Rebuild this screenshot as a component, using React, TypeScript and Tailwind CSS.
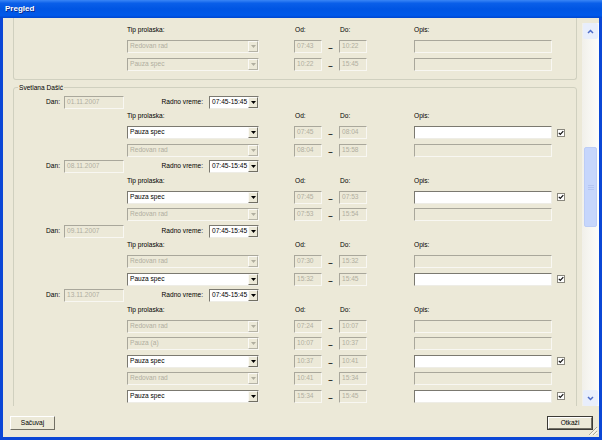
import React from "react";

type RowData = { tip: string; od: string; do: string; on: boolean };
type Block = { dan: string; rows: RowData[] };

const group1: RowData[] = [
  { tip: "Redovan rad", od: "07:43", do: "10:22", on: false },
  { tip: "Pauza spec", od: "10:22", do: "15:45", on: false },
];

const blocks: Block[] = [
  {
    dan: "01.11.2007",
    rows: [
      { tip: "Pauza spec", od: "07:45", do: "08:04", on: true },
      { tip: "Redovan rad", od: "08:04", do: "15:58", on: false },
    ],
  },
  {
    dan: "08.11.2007",
    rows: [
      { tip: "Pauza spec", od: "07:45", do: "07:53", on: true },
      { tip: "Redovan rad", od: "07:53", do: "15:54", on: false },
    ],
  },
  {
    dan: "09.11.2007",
    rows: [
      { tip: "Redovan rad", od: "07:30", do: "15:32", on: false },
      { tip: "Pauza spec", od: "15:32", do: "15:45", on: true },
    ],
  },
  {
    dan: "13.11.2007",
    rows: [
      { tip: "Redovan rad", od: "07:24", do: "10:07", on: false },
      { tip: "Pauza (a)", od: "10:07", do: "10:37", on: false },
      { tip: "Pauza spec", od: "10:37", do: "10:41", on: true },
      { tip: "Redovan rad", od: "10:41", do: "15:34", on: false },
      { tip: "Pauza spec", od: "15:34", do: "15:45", on: true },
    ],
  },
];

function Field({ w, text, on }: { w: string; text: string; on?: boolean }) {
  return (
    <div
      className={`${w} shrink-0 h-full flex items-center pl-[2px] border overflow-hidden whitespace-nowrap ${
        on
          ? "bg-white text-black border-t-[#7b7970] border-l-[#7b7970] border-b-[#eeede6] border-r-[#eeede6]"
          : "bg-[#ece9d8] text-[#b0ae9f] border-t-[#a9a79b] border-l-[#a9a79b] border-b-[#f8f7f2] border-r-[#f8f7f2]"
      }`}
    >
      {text}
    </div>
  );
}

function Select({ w, text, on }: { w: string; text: string; on?: boolean }) {
  return (
    <div
      className={`${w} shrink-0 h-full flex border ${
        on
          ? "bg-white text-black border-t-[#7b7970] border-l-[#7b7970] border-b-[#eeede6] border-r-[#eeede6]"
          : "bg-[#ece9d8] text-[#b0ae9f] border-t-[#a9a79b] border-l-[#a9a79b] border-b-[#f8f7f2] border-r-[#f8f7f2]"
      }`}
    >
      <div className="flex-1 flex items-center pl-[2px] overflow-hidden whitespace-nowrap">{text}</div>
      <div
        className={`w-[10px] shrink-0 h-full flex items-center justify-center bg-[#ece9d8] border border-t-[#fbfaf6] border-l-[#fbfaf6] ${
          on ? "border-b-[#716f64] border-r-[#716f64]" : "border-b-[#b5b3a6] border-r-[#b5b3a6]"
        }`}
      >
        <svg width="5" height="3" viewBox="0 0 5 3">
          <path d="M0 0h5L2.5 3z" fill={on ? "#000" : "#b0ae9f"} />
        </svg>
      </div>
    </div>
  );
}

function Check() {
  return (
    <div className="self-center w-[8px] h-[8px] shrink-0">
      <svg width="8" height="8" viewBox="0 0 8 8">
        <rect x="0.5" y="0.5" width="7" height="7" fill="#fff" stroke="#8a887e" strokeWidth="1" />
        <path d="M1.8 3.8 L3.3 5.4 L6.3 2.2" fill="none" stroke="#111" strokeWidth="1.2" />
      </svg>
    </div>
  );
}

function Header() {
  return (
    <div className="h-[10px] flex items-center text-black whitespace-nowrap">
      <div className="w-[113px] shrink-0" />
      <div className="w-[132px] shrink-0">Tip prolaska:</div>
      <div className="w-[35px] shrink-0" />
      <div className="w-[45px] shrink-0 pl-[1px]">Od:</div>
      <div className="w-[75px] shrink-0 pl-[1px]">Do:</div>
      <div>Opis:</div>
    </div>
  );
}

function Row({ r }: { r: RowData }) {
  return (
    <div className="h-[13px] flex items-stretch">
      <div className="w-[113px] shrink-0" />
      <Select w="w-[132px]" text={r.tip} on={r.on} />
      <div className="w-[35px] shrink-0" />
      <Field w="w-[28px]" text={r.od} />
      <div className="w-[17px] shrink-0 flex justify-center items-center pt-[3px] font-bold text-[8px] text-black">
        –
      </div>
      <Field w="w-[28px]" text={r.do} />
      <div className="w-[47px] shrink-0" />
      <Field w="w-[138px]" text="" on={r.on} />
      <div className="w-[5px] shrink-0" />
      {r.on && <Check />}
    </div>
  );
}

function DanRow({ dan }: { dan: string }) {
  return (
    <div className="h-[13px] flex items-stretch text-black whitespace-nowrap">
      <div className="w-[46px] shrink-0 flex items-center justify-end">Dan:</div>
      <div className="w-[4px] shrink-0" />
      <Field w="w-[60px]" text={dan} />
      <div className="w-[79px] shrink-0 flex items-center justify-end">Radno vreme:</div>
      <div className="w-[6px] shrink-0" />
      <Select w="w-[50px]" text="07:45-15:45" on />
    </div>
  );
}

function ArrowBtn({ up }: { up?: boolean }) {
  return (
    <div className="h-[16px] shrink-0 mx-[1px] rounded-[2px] bg-[#e8eefc] flex items-center justify-center">
      <svg width="7" height="5" viewBox="0 0 7 5">
        <path
          d={up ? "M1 4 L3.5 1.5 L6 4" : "M1 1 L3.5 3.5 L6 1"}
          fill="none"
          stroke="#4d6bc8"
          strokeWidth="1.5"
        />
      </svg>
    </div>
  );
}

function Scrollbar() {
  return (
    <div className="w-[17px] shrink-0 pt-[5px] flex flex-col">
      <div className="flex-1 flex flex-col bg-[linear-gradient(to_right,#f1f0ea,#fdfdfb)]">
        <ArrowBtn up />
        <div className="flex-1 flex flex-col">
          <div className="h-[108px] shrink-0" />
          <div className="h-[80px] shrink-0 mx-[2px] rounded-[2px] bg-[#c6d6fc] border border-[#bccdf6] flex flex-col items-center justify-center gap-[1px]">
            <div className="w-[6px] h-[1px] bg-[#b4c5f2]" />
            <div className="w-[6px] h-[1px] bg-[#b4c5f2]" />
            <div className="w-[6px] h-[1px] bg-[#b4c5f2]" />
          </div>
        </div>
        <ArrowBtn />
      </div>
    </div>
  );
}

function Button({ text, def }: { text: string; def?: boolean }) {
  return (
    <div className={`h-[14px] ${def ? "w-[46px] border border-[#3c3b36]" : "w-[45px]"} flex`}>
      <div className="flex-1 flex items-center justify-center bg-[#ece9d8] border border-t-white border-l-white border-b-[#716f64] border-r-[#716f64] text-black">
        {text}
      </div>
    </div>
  );
}

export default function App() {
  return (
    <div className="w-[602px] h-[440px] flex flex-col bg-[#0b47d6] font-['Liberation_Sans',Arial,sans-serif] text-[6.6px] leading-none overflow-hidden">
      <div className="h-[18px] shrink-0 flex items-center pl-[5px] bg-[linear-gradient(to_bottom,#3a86f6_0%,#0a5fe9_18%,#0055e3_50%,#0059ea_85%,#0046cf_100%)]">
        <span className="text-white font-bold text-[8px] [text-shadow:1px_1px_0_#0b2a8a]">Pregled</span>
      </div>
      <div className="flex-1 mx-[3px] mb-[3px] bg-[#ece9d8] flex flex-col relative">
        <div className="h-[388px] shrink-0 flex">
          <div className="flex-1 overflow-hidden">
            <div className="ml-[10px] w-[564px] border-x border-b border-[#d0d0bf] rounded-b-[3px] pt-[7px] pb-[8.5px] flex flex-col">
              <Header />
              <div className="mt-[5px] flex flex-col gap-[4.5px]">
                {group1.map((r, i) => (
                  <Row key={i} r={r} />
                ))}
              </div>
            </div>
            <fieldset className="ml-[10px] w-[564px] mt-[2.5px] border border-[#d0d0bf] rounded-[3px] p-0 m-0">
              <legend className="ml-[4px] px-[1px] leading-[9px] text-black">Svetlana Dašić</legend>
              <div className="pt-[4px] flex flex-col gap-[3.5px]">
                {blocks.map((b, i) => (
                  <div key={i} className="flex flex-col">
                    <DanRow dan={b.dan} />
                    <div className="mt-[3px]">
                      <Header />
                    </div>
                    <div className="mt-[4.5px] flex flex-col gap-[4.5px]">
                      {b.rows.map((r, j) => (
                        <Row key={j} r={r} />
                      ))}
                    </div>
                  </div>
                ))}
                <div className="h-[20px]" />
              </div>
            </fieldset>
          </div>
          <Scrollbar />
        </div>
        <div className="flex-1 flex justify-between items-start pt-[10px] pl-[7px] pr-[6px]">
          <Button text="Sačuvaj" />
          <Button text="Otkaži" def />
        </div>
        <div className="absolute right-[1px] bottom-[1px]">
          <svg width="11" height="11" viewBox="0 0 11 11">
            <path d="M10 2 L2 10 M10 6 L6 10 M10 9.5 L9.5 10" stroke="#aca899" strokeWidth="1" />
            <path d="M10.5 3 L3 10.5 M10.5 7 L7 10.5" stroke="#ffffff" strokeWidth="1" />
          </svg>
        </div>
      </div>
    </div>
  );
}
